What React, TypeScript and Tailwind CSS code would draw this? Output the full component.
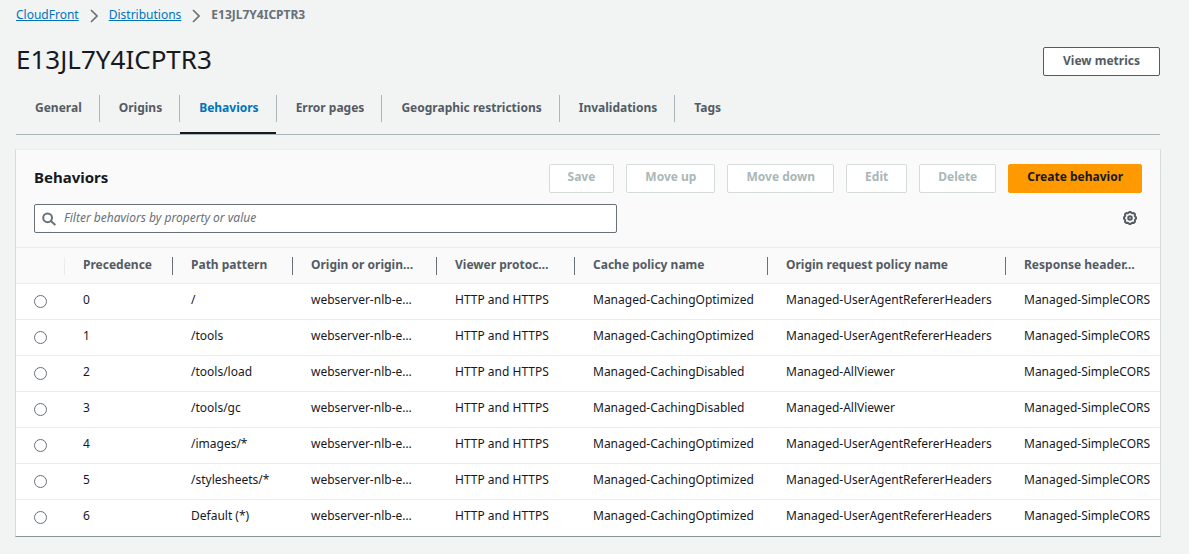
import type { ReactNode } from "react";

const tabs = ["General", "Origins", "Behaviors", "Error pages", "Geographic restrictions", "Invalidations", "Tags"];
const actions = ["Save", "Move up", "Move down", "Edit", "Delete"];

const columns = [
  { label: "Precedence", width: "w-[108px]" },
  { label: "Path pattern", width: "w-[120px]" },
  { label: "Origin or origin…", width: "w-[144px]" },
  { label: "Viewer protoc…", width: "w-[138px]" },
  { label: "Cache policy name", width: "w-[193px]" },
  { label: "Origin request policy name", width: "w-[238px]" },
  { label: "Response header…", width: "w-auto" },
];

const optimized = ["Managed-CachingOptimized", "Managed-UserAgentRefererHeaders"];
const disabled = ["Managed-CachingDisabled", "Managed-AllViewer"];

const rows: { path: string; policies: string[] }[] = [
  { path: "/", policies: optimized },
  { path: "/tools", policies: optimized },
  { path: "/tools/load", policies: disabled },
  { path: "/tools/gc", policies: disabled },
  { path: "/images/*", policies: optimized },
  { path: "/stylesheets/*", policies: optimized },
  { path: "Default (*)", policies: optimized },
];

function Chevron() {
  return (
    <svg aria-hidden="true" viewBox="0 0 8 14" className="mt-0.5 h-3.5 w-2 fill-none stroke-[#687078] stroke-[1.6]">
      <path d="M1 1l6 6-6 6" />
    </svg>
  );
}

function SearchIcon() {
  return (
    <svg aria-hidden="true" viewBox="0 0 14 14" className="h-3.5 w-3.5 shrink-0 fill-none stroke-[#687078] stroke-2">
      <circle cx="5.6" cy="5.8" r="4.4" />
      <path d="M8.8 9L13.4 13" />
    </svg>
  );
}

function GearIcon() {
  return (
    <svg aria-hidden="true" viewBox="0 0 16 16" className="h-4 w-4 fill-none stroke-[#545b64] stroke-2">
      <path
        strokeLinejoin="round"
        d="M6.5 2.900L7.200 2h1.600l.7.900 1 .4 1.400-.200 1.100 1.100-.2 1.300.3 1 .9.700v1.600l-.9.700-.3 1 .2 1.300-1.100 1.100-1.400-.2-1 .4-.7.900H7.200l-.7-.9-1-.4-1.400.2L3 11.800l.2-1.300-.3-1-.9-.7V7.200l.9-.7.3-1L3 4.200l1.100-1.100 1.400.2z"
      />
      <circle cx="8" cy="8" r="1.800" />
    </svg>
  );
}

function Cell({ children }: { children: ReactNode }) {
  return <td className="whitespace-nowrap pb-[3px] pl-[18px] pr-0">{children}</td>;
}

export default function App() {
  return (
    <main className="min-h-screen bg-[#f2f3f3] pb-4 pl-4 pr-[29px] pt-[5px] font-['Noto_Sans',sans-serif] text-xs leading-5 text-[#16191f]">
      <nav aria-label="Breadcrumbs" className="flex items-center gap-[11px] leading-5">
        <a href="#cloudfront" className="text-[#0073bb] underline">CloudFront</a>
        <Chevron />
        <a href="#distributions" className="text-[#0073bb] underline">Distributions</a>
        <Chevron />
        <span className="font-bold text-[#687078]">E13JL7Y4ICPTR3</span>
      </nav>

      <header className="mt-[18px] flex items-start justify-between">
        <h1 className="text-[26px] leading-8">E13JL7Y4ICPTR3</h1>
        <button type="button" className="mt-1 h-[29px] rounded-xs border border-[#545b64] bg-white px-[19px] pb-0.5 font-bold text-[#545b64]">
          View metrics
        </button>
      </header>

      <div role="tablist" className="mt-[18px] flex border-b border-[#aab7b8] font-bold text-[#545b64]">
        {tabs.map((tab) => (
          <div key={tab} className="group flex items-start">
            <button
              type="button"
              role="tab"
              aria-selected={tab === "Behaviors"}
              className="h-10 border-b-2 border-transparent pb-2.5 pl-[19px] pr-[17px] aria-selected:border-[#16191f] aria-selected:text-[#0073bb]"
            >
              {tab}
            </button>
            <span className="mt-px h-[27px] w-px bg-[#aab7b8] group-last:hidden" />
          </div>
        ))}
      </div>

      <section className="-mx-px mt-3.5 border-x border-b border-t border-[#d5dbdb] border-b-[#879596] border-t-[#eaeded] bg-white">
        <div className="bg-[#fafafa] px-[18px] py-3.5">
          <div className="flex items-center justify-between">
            <h2 className="pb-1 text-[15px] leading-6 font-bold">Behaviors</h2>
            <div className="flex gap-3 font-bold">
              {actions.map((action) => (
                <button key={action} type="button" disabled className="h-[29px] rounded-xs border border-[#d5dbdb] bg-white px-[18px] pb-1 text-[#aab7b8]">
                  {action}
                </button>
              ))}
              <button type="button" className="h-[29px] rounded-xs border border-[#ff9900] bg-[#ff9900] px-[18px] pb-1">
                Create behavior
              </button>
            </div>
          </div>
          <div className="mt-[11px] flex items-center justify-between">
            <label className="flex h-[29px] w-[583px] items-center gap-2 rounded-xs border border-[#687078] bg-white px-[7px]">
              <SearchIcon />
              <input
                type="text"
                aria-label="Filter behaviors"
                placeholder="Filter behaviors by property or value"
                className="w-full bg-transparent pb-0.5 leading-5 outline-none placeholder:italic placeholder:text-[#687078]"
              />
            </label>
            <button type="button" aria-label="Preferences" className="mr-1 pb-0.5">
              <GearIcon />
            </button>
          </div>
        </div>

        <table className="w-full table-fixed border-collapse text-left">
          <thead>
            <tr className="h-9 border-y border-[#eaeded] bg-[#fafafa] text-[#545b64]">
              <th className="w-[49px] p-0">
                <div className="ml-auto h-[18px] w-px bg-[#eaeded]" />
              </th>
              {columns.map((column) => (
                <th key={column.label} className={`group p-0 ${column.width}`}>
                  <div className="flex h-[18px] items-center whitespace-nowrap border-r border-[#687078] pb-0.5 pl-[18px] group-last:border-r-0">
                    {column.label}
                  </div>
                </th>
              ))}
            </tr>
          </thead>
          <tbody>
            {rows.map((row, index) => (
              <tr key={row.path} className="h-9 border-b border-[#eaeded] last:border-b-0">
                <td className="p-0 pl-[18px]">
                  <input
                    type="radio"
                    name="behavior"
                    aria-label={`Select ${row.path}`}
                    className="block h-[13px] w-[13px] appearance-none rounded-full border border-[#687078] bg-white checked:border-4 checked:border-[#0073bb]"
                  />
                </td>
                <Cell>{index}</Cell>
                <Cell>{row.path}</Cell>
                <Cell>webserver-nlb-e…</Cell>
                <Cell>HTTP and HTTPS</Cell>
                <Cell>{row.policies[0]}</Cell>
                <Cell>{row.policies[1]}</Cell>
                <Cell>Managed-SimpleCORS</Cell>
              </tr>
            ))}
          </tbody>
        </table>
      </section>
    </main>
  );
}
